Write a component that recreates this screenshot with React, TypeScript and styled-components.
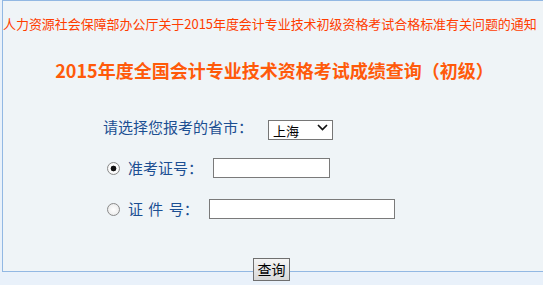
import React, { useState } from 'react'
import styled, { createGlobalStyle } from 'styled-components'

const GlobalStyle = createGlobalStyle`
  html, body {
    margin: 0;
    padding: 0;
    background: #e9f1fa;
    overflow: hidden;
  }
  body {
    font-family: "Noto Sans CJK SC", "Noto Sans", sans-serif;
  }
`

const Frame = styled.div`
  margin-left: 2px;
  width: 541px;
  height: 270px;
  border: 1px solid #92b8e3;
  border-right: none;
  background: #eff4f7;
  overflow: hidden;
`

const Notice = styled.a`
  display: block;
  margin: 14px 0 0 0;
  font-size: 13px;
  line-height: 18px;
  color: #ff3d00;
  text-decoration: none;
  white-space: nowrap;
  letter-spacing: -0.05px;
`

const Title = styled.h1`
  margin: 25px 0 0 0;
  text-align: center;
  font-size: 18px;
  line-height: 24px;
  font-weight: bold;
  color: #ff5a0a;
  white-space: nowrap;
  padding-left: 2px;
`

const Form = styled.form`
  margin: 35px 0 0 96px;
  display: flex;
  flex-direction: column;
  gap: 21px;
`

const Row = styled.div<{ $indent?: number }>`
  display: flex;
  align-items: center;
  height: 20px;
  padding-left: ${p => p.$indent ?? 0}px;
`

const Label = styled.label<{ $spread?: number }>`
  font-size: 15px;
  line-height: 20px;
  color: #1c4f92;
  white-space: pre;
  word-spacing: ${p => p.$spread ?? 0}px;
  margin-right: 7px;
`

const SelectWrap = styled.div`
  position: relative;
  width: 65px;
  height: 20px;
  margin-left: 8px;
`

const Select = styled.select`
  appearance: none;
  width: 65px;
  height: 20px;
  box-sizing: border-box;
  border: 1px solid #767676;
  background: #fff;
  font-family: "Noto Sans CJK SC", sans-serif;
  font-size: 13px;
  padding: 0 0 0 4px;
  color: #000;
  outline: none;
`

const Chevron = styled.svg`
  position: absolute;
  right: 5px;
  top: 7px;
  pointer-events: none;
`

const Radio = styled.input`
  appearance: none;
  width: 13px;
  height: 13px;
  margin: 0 8px 0 0;
  border-radius: 50%;
  border: 1px solid #8a8a8a;
  box-sizing: border-box;
  background: radial-gradient(circle, #ffffff 0%, #f0f0f0 60%, #dcdcdc 100%);
  &:checked {
    background: radial-gradient(circle, #111 0 2.6px, #ffffff 3.2px, #ececec 100%);
  }
`

const TextBox = styled.input<{ $w: number }>`
  width: ${p => p.$w}px;
  height: 20px;
  box-sizing: border-box;
  border: 1px solid #7a7a7a;
  background: #fff;
  margin: 0 0 0 3px;
  padding: 0 3px;
  outline: none;
`

const ButtonRow = styled.div`
  width: 541px;
  margin-left: 2px;
  margin-top: -14px;
  display: flex;
  justify-content: center;
`

const QueryButton = styled.button`
  width: 37px;
  height: 23px;
  box-sizing: border-box;
  border: 1px solid #6f6f6f;
  background: linear-gradient(#f4f4f4, #e6e6e6 50%, #d8d8d8);
  font-family: "Noto Sans CJK SC", sans-serif;
  font-size: 14px;
  line-height: 19px;
  color: #000;
  padding: 0;
  margin-left: -2px;
`

export default function App() {
  const [mode, setMode] = useState('ticket')
  const [city, setCity] = useState('上海')

  return (
    <>
      <GlobalStyle />
      <Frame>
        <Notice href="#">
          人力资源社会保障部办公厅关于2015年度会计专业技术初级资格考试合格标准有关问题的通知
        </Notice>
        <Title>2015年度全国会计专业技术资格考试成绩查询（初级）</Title>
        <Form onSubmit={e => e.preventDefault()}>
          <Row $indent={4}>
            <Label>请选择您报考的省市：</Label>
            <SelectWrap>
              <Select value={city} onChange={e => setCity(e.target.value)}>
                <option>北京</option>
                <option>上海</option>
                <option>天津</option>
              </Select>
              <Chevron width="11" height="7" viewBox="0 0 11 7">
                <path d="M1 1 L5.5 5.5 L10 1" fill="none" stroke="#111" strokeWidth="1.7" />
              </Chevron>
            </SelectWrap>
          </Row>
          <Row $indent={8}>
            <Radio type="radio" name="mode" checked={mode === 'ticket'} onChange={() => setMode('ticket')} />
            <Label>准考证号：</Label>
            <TextBox $w={117} />
          </Row>
          <Row $indent={8}>
            <Radio type="radio" name="mode" checked={mode === 'id'} onChange={() => setMode('id')} />
            <Label $spread={2}>证 件 号：</Label>
            <TextBox $w={186} />
          </Row>
        </Form>
      </Frame>
      <ButtonRow>
        <QueryButton>查询</QueryButton>
      </ButtonRow>
    </>
  )
}
